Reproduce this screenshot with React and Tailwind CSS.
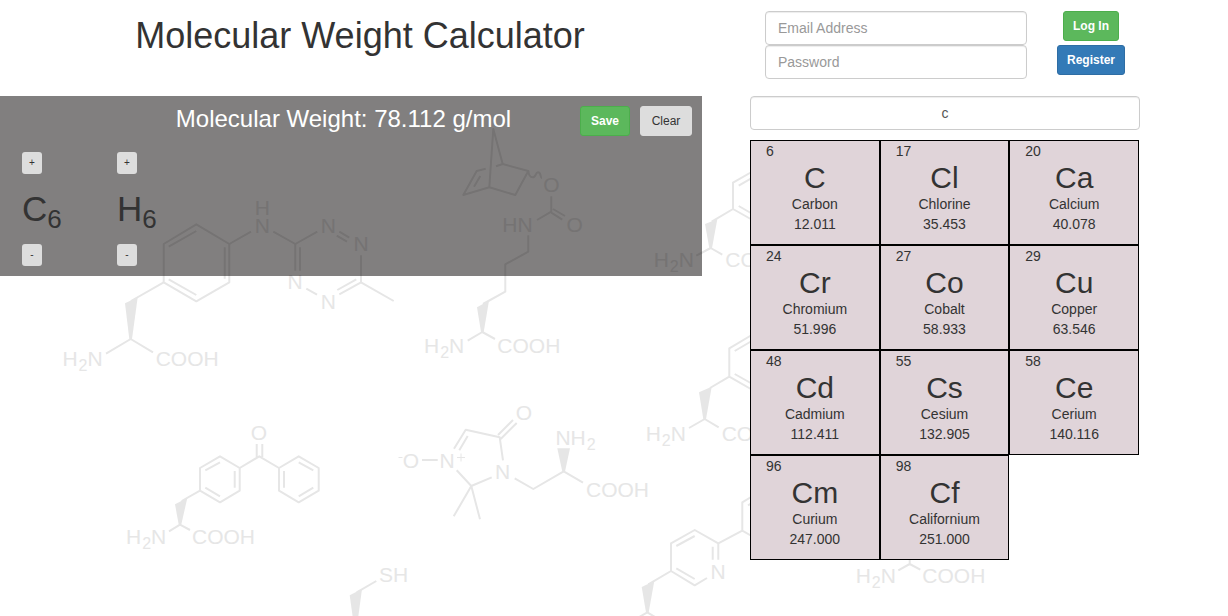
import { useState } from "react";

const BONDS = [
  // tetrazine amino acid
  "M196.3 224.3L163.7 244V282.3L196.3 301.3L229.3 282.3V244ZM168.7 246.7L196.3 231M224.7 247.3V278.7M168.7 279.3L196.3 295",
  "M163.7 282.3L131 301M106 353.7L130.7 339L153 352.3M229.3 244L251 231.7M273.3 231.7L295.3 244L317.3 231.7",
  "M339.3 231.7L349.3 237.7M336.7 235.7L347 241.7M361 255.3V282.3L393.7 301M361 282.3L339.3 294.3M356.3 279.3L337.3 290M306.3 288.7L317 294.7M295.3 244V270.7M300 247.3V270.7",
  // norbornene amino acid
  "M502.7 164L493.3 129L489.3 187.3M496 166.3L502.7 164L528.3 171L515.3 195L489.3 187.3L463.3 195L476.7 171L485.7 168.7M480.3 176L474 186.7",
  "M528.3 171Q529 177.3 532.5 177.3C536.5 177.3 535 172.3 538 172.3C541.5 172.3 540 178 542 178.3",
  "M551.3 196.3V211.7L537 220M553 209L565 216M551.3 212.7L562.3 219.7M528.3 235.3V251.7L505.3 264.3V291.7L483 304M467.7 340.7L482.3 332L495 339",
  // benzophenone amino acid
  "M220 456.3L200 468V490.7L220 502.3L239.7 490.7V468ZM205.3 470.3L220 462.3M234.7 471V487.7M205.3 487.7L220 496.3M239.7 468L259.3 456.3L279 468M256.7 457V444M262.3 457V444",
  "M298.7 456.3L279 468V490.7L298.7 502.3L318.7 490.7V468ZM284 471V487.7M298.7 462.3L313.3 470.3M298.7 496.3L313.3 487.7M200 490.7L181.7 501M169 531.3L180 524.7L190 530",
  // thiol
  "M376.3 581L356.7 592.3",
  // nitroxide amino acid
  "M422 460H437.7M454 448.7L465.7 429.7L499.7 437.3L503 460.3M459.3 450.3L467.7 436M498 435L513 420M500.7 439L516.7 423",
  "M491.7 477.3L471.3 486L456.7 470.3M453.7 516.3L471.3 486L480 519.3M514.7 478.3L533.3 489L563.7 471.3L583 482.7",
  // partly covered structures
  "M756 169.5L733 182.7V209L756 222M738.7 185.7L756 175.7M738.7 206L756 216M733 209L711.7 221.7M696.3 255.7L710.7 248L722.3 254.7",
  "M756 332.5L729.3 348.3V376.7L756 392M734.7 351L756 338.5M734.7 374L756 386M729.3 376.7L710 388M689 428L704.7 419L718.7 427.3",
  "M718.3 559.7V543.3L694.7 530L671 543.3V571L694.7 585.3L707 578M712.7 546.7V559.7M676.3 546L694.7 536M676.3 568.3L694.7 579M718.3 543.3L742.3 530.7V502.3L756 494M742.3 530.7L756 538.5M748 505.3L756 500.5M671 571L648.3 584.3M639.3 617L647.3 612.3L655 617",
  "M898.3 570.3L909.7 564L920.3 569.7M909.7 556V564",
];

const WEDGES = [
  "125,303.3 137.7,297.3 132,339 129.3,339",
  "477,307.3 489,300.7 483.7,332 481,332",
  "175,504.3 187.3,498 181.3,524.5 178.7,524.5",
  "349.7,595.3 362,589 357.3,624 353.7,624",
  "557.3,448.3 570,448.3 565,471.5 562.3,471.5",
  "705,224 717.3,219.3 712,248 709.3,248",
  "699,392.3 711.7,386.7 706,419 703.3,419",
  "641.7,587 654.3,581 648.7,612.3 646,612.3",
];

const ATOMS = [
  [262.3, 214.7, "H"], [262.3, 232.7, "N"], [328.3, 232.7, "N"], [361, 251, "N"],
  [295, 289.3, "N"], [328.3, 308.7, "N"], [551.3, 192.3, "O"], [574.7, 232.3, "O"],
  [517.5, 232.3, "HN"], [259, 440.3, "O"], [393.5, 582.3, "SH"], [411, 467.7, "O"],
  [447, 467.7, "N"], [524, 419.7, "O"], [502.7, 478.7, "N"], [718, 578.7, "N"],
];

const AMINES = [
  [62.4, 365.7], [424, 353], [126, 543.7], [653.7, 267.3], [645.7, 440.7], [855.7, 583],
];

const ACIDS = [
  [155.7, 365.7], [497.3, 353], [192, 543.7], [586, 496.7], [725.3, 267.3], [721.7, 440.7], [922.3, 583],
];

function MoleculeBackdrop() {
  return (
    <svg
      aria-hidden="true"
      width="1228"
      height="700"
      className="pointer-events-none absolute left-0 top-0 -z-10 max-w-none select-none"
      fontSize="21"
      fill="#e6e6e6"
    >
      <g fill="none" stroke="#e6e6e6" strokeWidth="2" strokeLinejoin="round">
        {BONDS.map((d) => (
          <path key={d} d={d} />
        ))}
        <path strokeWidth="1" d="M398.5 457.5H402.5M457 457.5H465M461 453.5V461.5" />
      </g>
      {WEDGES.map((points) => (
        <polygon key={points} points={points} />
      ))}
      {ATOMS.map(([x, y, label]) => (
        <text key={`${x}-${y}`} x={x} y={y} textAnchor="middle">{label}</text>
      ))}
      {AMINES.map(([x, y]) => (
        <text key={`${x}-${y}`} x={x} y={y}>
          H<tspan dx="1" dy="5" fontSize="16">2</tspan><tspan dy="-5">N</tspan>
        </text>
      ))}
      <text x="555.4" y="444.7">
        NH<tspan dx="1" dy="5" fontSize="16">2</tspan>
      </text>
      {ACIDS.map(([x, y]) => (
        <text key={`${x}-${y}`} x={x} y={y}>COOH</text>
      ))}
    </svg>
  );
}

const ELEMENTS = [
  { number: 6, symbol: "C", name: "Carbon", weight: "12.011" },
  { number: 17, symbol: "Cl", name: "Chlorine", weight: "35.453" },
  { number: 20, symbol: "Ca", name: "Calcium", weight: "40.078" },
  { number: 24, symbol: "Cr", name: "Chromium", weight: "51.996" },
  { number: 27, symbol: "Co", name: "Cobalt", weight: "58.933" },
  { number: 29, symbol: "Cu", name: "Copper", weight: "63.546" },
  { number: 48, symbol: "Cd", name: "Cadmium", weight: "112.411" },
  { number: 55, symbol: "Cs", name: "Cesium", weight: "132.905" },
  { number: 58, symbol: "Ce", name: "Cerium", weight: "140.116" },
  { number: 96, symbol: "Cm", name: "Curium", weight: "247.000" },
  { number: 98, symbol: "Cf", name: "Californium", weight: "251.000" },
];

function ElementCell({ element }) {
  return (
    <button type="button" className="flex flex-col items-center border border-black bg-[#e0d4d9] px-[15px] pb-[10px] text-sm leading-5">
      <span className="self-start">{element.number}</span>
      <span className="text-[30px] leading-[33px]">{element.symbol}</span>
      <span>{element.name}</span>
      <span>{element.weight}</span>
    </button>
  );
}

function StepButton({ label, children }) {
  return (
    <button type="button" aria-label={label} className="h-[22px] w-5 rounded-[3px] bg-[#ddd] text-[10px] leading-4">
      {children}
    </button>
  );
}

function FormulaPart({ symbol, count }) {
  return (
    <div className="flex w-[95px] flex-col items-start gap-[15px]">
      <StepButton label={`Add one ${symbol}`}>+</StepButton>
      <div className="text-[35px] leading-10">
        {symbol}
        <sub className="text-[26px]">{count}</sub>
      </div>
      <StepButton label={`Remove one ${symbol}`}>-</StepButton>
    </div>
  );
}

const FIELD =
  "h-[34px] w-full rounded border border-[#ccc] bg-white px-3 text-sm text-[#555] shadow-[inset_0_1px_1px_rgba(0,0,0,0.075)] placeholder:text-[#999]";

export default function App() {
  const [query, setQuery] = useState("c");

  return (
    <div className="relative isolate min-h-screen overflow-hidden bg-white font-['Liberation_Sans',Arial,sans-serif] text-[#333]">
      <MoleculeBackdrop />
      <div className="max-w-[1140px]">
        <header className="flex min-h-24 items-start">
          <h1 className="flex-1 pr-[30px] pt-4 text-center text-4xl leading-10">Molecular Weight Calculator</h1>
          <form className="flex w-[390px] gap-[30px] pl-[15px] pt-[11px]">
            <div className="flex w-[262px] flex-col">
              <input type="email" aria-label="Email Address" placeholder="Email Address" className={FIELD} />
              <input type="password" aria-label="Password" placeholder="Password" className={FIELD} />
            </div>
            <div className="flex flex-col items-center gap-1 text-xs font-bold leading-[18px] text-white">
              <button type="button" className="rounded-[3px] border border-[#4cae4c] bg-[#5cb85c] px-[9px] py-[5px]">Log In</button>
              <button type="button" className="rounded-[3px] border border-[#2e6da4] bg-[#337ab7] px-[9px] py-[5px]">Register</button>
            </div>
          </form>
        </header>

        <main className="flex items-start gap-12">
          <section className="flex-1 bg-[#030001]/50 p-[10px]">
            <div className="flex items-start gap-[10px] text-xs leading-[18px]">
              <h2 className="flex-1 pl-[107px] text-center text-2xl leading-[26px] text-white">
                Molecular Weight: 78.112 g/mol
              </h2>
              <button type="button" className="rounded-[3px] border border-[#4cae4c] bg-[#5cb85c] px-[10px] py-[5px] font-bold text-white">Save</button>
              <button type="button" className="min-w-[52px] rounded-[3px] border border-[#ddd] bg-[#ddd] px-[10px] py-[5px]">Clear</button>
            </div>
            <div className="flex pl-3 pt-4">
              <FormulaPart symbol="C" count={6} />
              <FormulaPart symbol="H" count={6} />
            </div>
          </section>

          <section className="w-[390px]">
            <input
              type="text"
              aria-label="Search elements"
              value={query}
              onChange={(event) => setQuery(event.target.value)}
              className={`${FIELD} text-center`}
            />
            <div className="mr-px mt-[10px] grid grid-cols-3">
              {ELEMENTS.map((element) => (
                <ElementCell key={element.number} element={element} />
              ))}
            </div>
          </section>
        </main>
      </div>
    </div>
  );
}
